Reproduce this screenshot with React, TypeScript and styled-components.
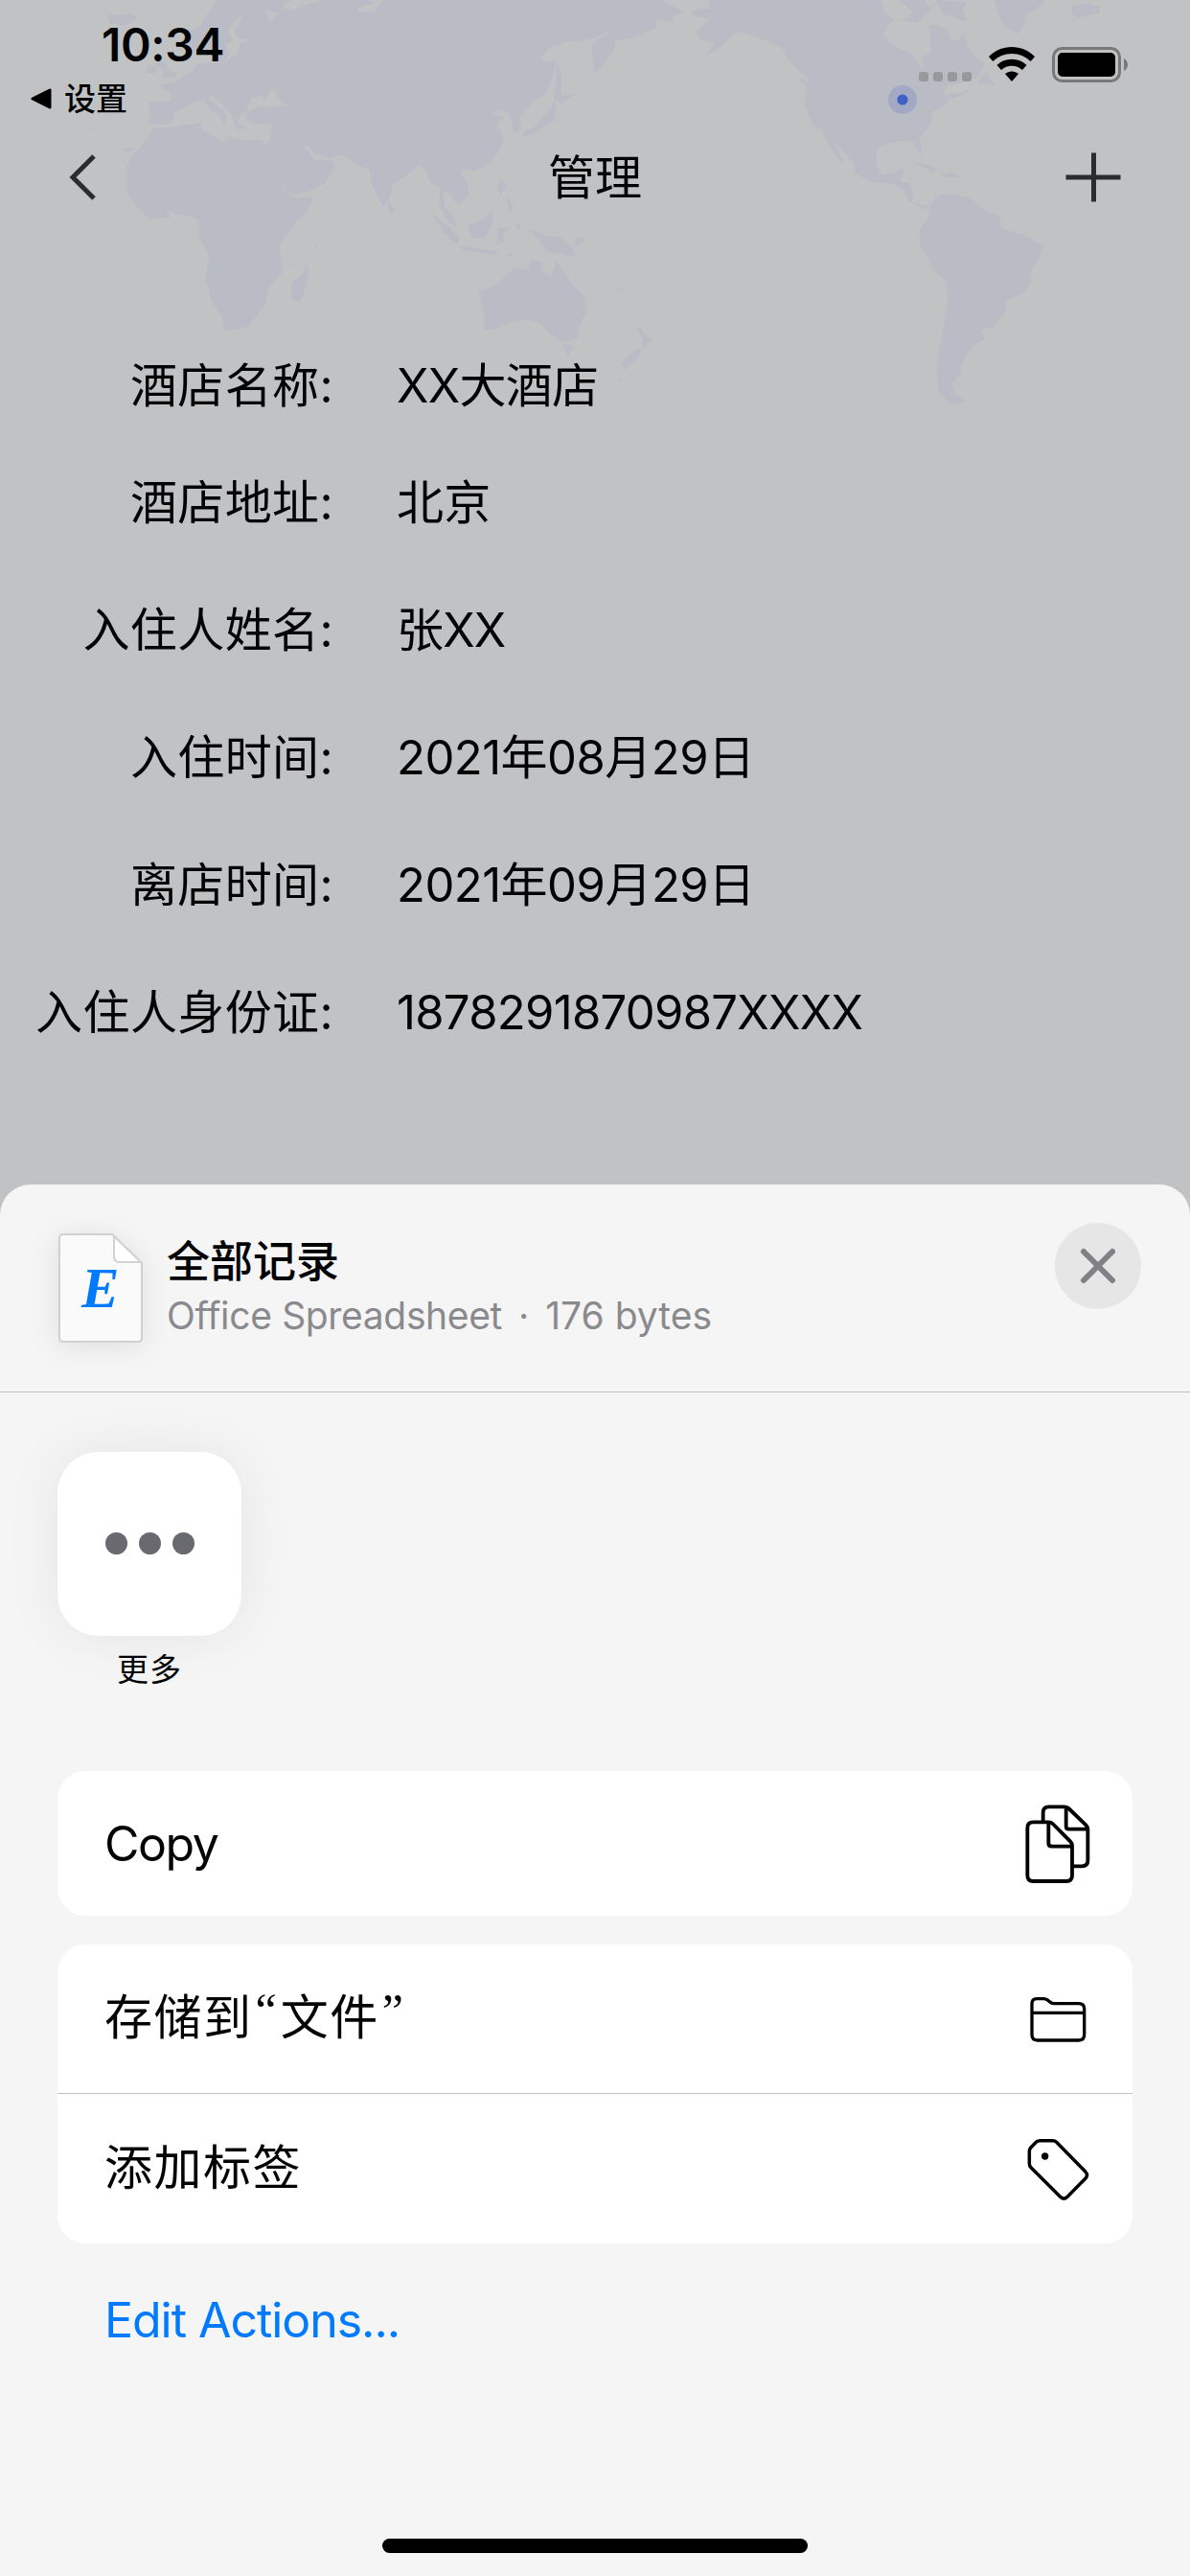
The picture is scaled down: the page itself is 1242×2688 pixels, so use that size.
import React from 'react';
import styled, { createGlobalStyle } from 'styled-components';

const GlobalStyle = createGlobalStyle`
  html, body { margin: 0; padding: 0; background: #c1c2c4; }
  * { box-sizing: border-box; }
`;

const Screen = styled.div`
  position: relative;
  display: flex;
  flex-direction: column;
  width: 1242px;
  height: 2688px;
  overflow: hidden;
  background: #c1c2c4;
  color: #000;
  font-family: Inter, 'Noto Sans CJK SC', sans-serif;
  white-space: nowrap;
`;

const MapBackdrop = styled.svg`
  position: absolute;
  top: 0;
  left: 0;
  width: 1242px;
  height: 440px;
`;

const Text = styled.span<{ $size: number; $weight?: number; $spacing?: number; $color?: string }>`
  font-size: ${(p) => p.$size}px;
  line-height: ${(p) => Math.round(p.$size * 1.2)}px;
  font-weight: ${(p) => p.$weight ?? 400};
  letter-spacing: ${(p) => p.$spacing ?? 0}px;
  color: ${(p) => p.$color ?? '#020304'};
`;

const Quote = styled.span<{ $before: number; $after: number }>`
  margin: 0 ${(p) => p.$after}px 0 ${(p) => p.$before}px;
  font-family: 'Liberation Serif', serif;
  letter-spacing: 0;
  line-height: 0;
  vertical-align: 8px;
`;

const MiddleDot = styled.span`
  margin: 0 6px;
`;

const StatusBar = styled.header`
  position: relative;
  display: flex;
  justify-content: space-between;
  height: 132px;
  padding: 18px 65px 0 32px;
`;

const StatusLeft = styled.div`
  display: flex;
  flex-direction: column;
`;

const Clock = styled.div`
  padding-left: 74px;
  height: 56px;
`;

const BackToApp = styled.div`
  display: flex;
  align-items: center;
  gap: 13px;
  height: 58px;
`;

const StatusIcons = styled.div`
  display: flex;
  align-items: flex-end;
  gap: 18px;
  height: 68px;
`;

const Signal = styled.div`
  display: flex;
  gap: 5px;
  padding-bottom: 1px;
`;

const SignalDot = styled.i`
  width: 10px;
  height: 10px;
  border-radius: 3px;
  background: #98999c;
`;

const NavBar = styled.nav`
  position: relative;
  display: grid;
  grid-template-columns: 1fr auto 1fr;
  align-items: center;
  height: 106px;
  padding: 0 72px;
`;

const NavEnd = styled.div`
  display: flex;
  justify-content: flex-end;
`;

const Details = styled.dl`
  position: relative;
  display: flex;
  flex-direction: column;
  margin: 0;
  padding-top: 108px;
  height: 998px;
`;

const DetailRow = styled.div<{ $height: number }>`
  display: grid;
  grid-template-columns: 348px 1fr;
  column-gap: 66px;
  align-items: center;
  height: ${(p) => p.$height}px;
`;

const DetailLabel = styled.dt`
  display: flex;
  justify-content: flex-end;
`;

const DetailValue = styled.dd`
  display: flex;
  margin: 0;
`;

const Sheet = styled.section`
  position: relative;
  display: flex;
  flex-direction: column;
  flex: 1;
  border-radius: 32px 32px 0 0;
  background: #f5f5f5;
`;

const SheetHeader = styled.div`
  display: flex;
  align-items: flex-start;
  height: 217px;
  padding: 40px 51px 0 50px;
  border-bottom: 1px solid #bfbfc1;
`;

const FileMeta = styled.div`
  display: flex;
  flex-direction: column;
  flex: 1;
  gap: 5px;
  padding: 14px 0 0 13px;
`;

const CloseButton = styled.button`
  display: flex;
  align-items: center;
  justify-content: center;
  width: 90px;
  height: 90px;
  padding: 0;
  border: 0;
  border-radius: 50%;
  background: #e6e6e6;
`;

const Apps = styled.div`
  display: flex;
  height: 395px;
  padding: 62px 60px 0;
`;

const AppItem = styled.div`
  display: flex;
  flex-direction: column;
  align-items: center;
  gap: 15px;
  width: 192px;
`;

const AppTile = styled.div`
  display: flex;
  align-items: center;
  justify-content: center;
  gap: 12px;
  width: 192px;
  height: 192px;
  padding-bottom: 1px;
  border-radius: 43px;
  background: #fff;
  box-shadow: 0 0 60px rgba(0, 0, 0, 0.07);
`;

const TileDot = styled.i`
  width: 23px;
  height: 23px;
  border-radius: 50%;
  background: #696970;
`;

const Actions = styled.div`
  display: flex;
  flex-direction: column;
  gap: 30px;
  padding: 0 60px;
`;

const Card = styled.div`
  display: flex;
  flex-direction: column;
  border-radius: 29px;
  background: #fff;
`;

const ActionRow = styled.div<{ $height: number; $divided?: boolean }>`
  display: flex;
  align-items: center;
  justify-content: space-between;
  height: ${(p) => p.$height}px;
  padding: 0 44px 0 49px;
  border-top: ${(p) => (p.$divided ? '1px solid #c3c3c5' : '0')};
`;

const ActionLabel = styled.div<{ $lift?: number }>`
  display: flex;
  padding-bottom: ${(p) => p.$lift ?? 0}px;
`;

const ActionIcon = styled.div`
  display: flex;
  justify-content: center;
  width: 68px;
  padding-top: 1px;
`;

const EditLink = styled.a`
  display: flex;
  padding: 50px 0 0 109px;
`;

const HomeIndicator = styled.div`
  width: 444px;
  height: 15px;
  margin: auto auto 24px;
  border-radius: 8px;
  background: #000;
`;

const WorldMap = () => (
  <MapBackdrop viewBox="0 0 1242 440" fill="#b9bcc5">
    <g transform="scale(.39605 .33333)" strokeLinejoin="round">
      {/* Europe and Asia */}
      <path d="M570 0 L548 40 528 80 500 98 492 130 512 160 530 146 548 158 566 190 590 196 604 170 594 142 612 126 600 96 618 64 640 46 632 72 618 96 626 120 664 124 630 138 628 164 606 182 596 198 560 196 520 200 508 222 486 236 460 258 424 264 426 276 448 290 450 316 392 320 394 386 436 390 456 378 460 352 490 332 516 316 536 312 552 344 580 364 592 392 598 360 578 340 548 306 556 298 580 318 602 344 614 376 626 404 650 402 628 386 630 364 652 346 660 310 690 296 694 312 716 280 730 282 726 298 756 332 714 336 680 334 652 350 646 370 664 388 716 390 712 436 690 460 704 500 728 550 752 590 770 610 826 594 858 572 882 520 874 502 830 500 806 466 804 448 832 482 866 494 900 484 944 516 974 530 980 580 1010 650 1024 630 1034 580 1080 540 1106 516 1126 544 1132 570 1160 590 1156 640 1180 690 1204 714 1196 680 1172 646 1168 600 1186 608 1208 642 1236 612 1232 572 1212 540 1228 526 1250 538 1290 512 1318 466 1328 436 1310 390 1328 366 1298 358 1318 342 1336 350 1350 382 1352 418 1374 404 1370 368 1404 320 1440 294 1460 226 1466 194 1424 188 1446 150 1500 130 1530 128 1568 118 1575 0 1010 0 990 34 950 40 940 24 984 12 970 0 850 0 800 16 764 34 740 20 728 50 712 70 696 32 728 40 760 4 780 0Z" />
      <path d="M404 400 L450 398 526 384 536 412 570 430 592 446 604 428 650 438 690 438 700 480 724 540 752 596 770 618 826 618 808 664 776 700 736 768 746 850 708 900 700 950 656 1022 594 1038 584 990 560 950 540 876 552 800 522 736 526 690 500 676 460 670 440 650 448 680 398 684 366 656 334 606 334 520 360 470 390 430Z" />
      <path d="M806 828 L816 850 800 920 788 944 768 940 768 884 792 864Z M284 40 L308 50 350 42 360 60 326 82 288 74Z M412 184 L438 196 444 220 468 232 460 244 424 244 432 220 412 206Z M392 200 L414 206 410 230 384 230Z M240 404 L256 398 246 410Z M320 466 L360 462 336 476Z" />
      {/* Islands of south-east Asia and Japan */}
      <path d="M1136 668 L1180 706 1210 740 1206 768 1170 730Z M1210 768 L1250 778 1310 786 1314 798 1220 784Z M1296 662 L1300 700 1276 748 1244 744 1232 706 1270 690Z M1318 556 L1336 580 1320 610 1310 590Z M1336 612 L1354 650 1340 664Z M1312 716 L1348 710 1324 728 1330 756 1310 766Z M1360 698 L1376 710 1362 724Z M1394 716 L1440 738 1480 742 1510 780 1520 808 1480 792 1444 790 1424 756Z M1520 740 L1546 752 1516 770Z M1334 796 L1360 790 1340 806Z M1022 630 L1040 660 1028 670Z M1468 190 L1480 240 1478 300 1516 292 1480 324 1458 312 1466 340 1460 380 1430 398 1388 430 1376 418 1410 396 1436 360 1456 330 1466 250Z" />
      <path d="M1400 812 L1432 822 1426 850 1454 868 1466 812 1484 848 1510 890 1540 930 1546 980 1526 1020 1520 1060 1486 1072 1450 1046 1420 1010 1384 1000 1340 1010 1312 1028 1276 1034 1276 980 1262 912 1310 890 1332 860 1360 836 1390 844Z M1482 1076 L1510 1082 1498 1120Z" />
      <path d="M766 826 L780 828 772 836Z M826 766 L836 770 832 784Z" />
    </g>
    <g transform="translate(621 0) scale(.39605 .33333)">
      <path d="M-10 0 L180 0 200 16 236 34 208 50 204 70 156 60 166 84 130 104 96 120 54 126 50 160 0 232 -10 150 0 130 40 102 60 92 -10 118Z" />
      {/* North America */}
      <path d="M300 0 L756 0 764 44 790 60 772 80 760 112 790 144 840 172 856 210 866 216 864 180 886 160 880 78 904 78 930 98 936 124 960 130 970 102 984 150 1010 190 1028 200 1010 240 960 262 924 270 916 300 980 284 1002 276 960 302 930 310 926 328 890 350 886 390 856 430 862 488 850 470 840 444 800 440 742 462 742 520 760 550 790 540 816 524 806 568 830 574 840 610 836 636 880 644 872 656 826 630 816 600 780 574 730 572 684 540 684 512 650 470 624 428 656 510 640 500 596 408 574 390 552 330 556 272 530 230 566 264 560 244 520 204 490 150 450 126 376 98 350 124 320 156 286 182 316 134 282 128 266 100 302 60 252 46 264 30 300 26Z" />
      <path d="M800 0 L868 0 886 30 850 70 806 64 840 40Z M900 0 L980 6 968 30 982 62 960 66 940 48 916 46Z M1052 0 L1188 0 1166 26 1136 44 1134 70 1114 106 1084 90 1062 48Z M1256 20 L1290 10 1330 22 1328 42 1270 56 1254 36Z M1016 242 L1032 224 1054 266 1010 262Z M842 508 L880 516 900 532 890 540Z M906 546 L940 540 964 554 930 556Z" />
      {/* South America */}
      <path d="M884 642 L900 614 930 606 990 620 1020 654 1068 680 1070 714 1130 736 1182 770 1170 810 1150 840 1148 880 1132 916 1084 942 1084 970 1048 1026 1016 1032 1028 1060 1000 1080 984 1100 976 1120 966 1140 964 1170 940 1200 948 1230 978 1256 938 1266 906 1230 900 1160 908 1090 922 1000 930 940 926 880 892 850 876 800 854 766 856 716 880 682Z" />
      <path d="M108 1018 L134 1050 154 1062 126 1090 122 1056Z M106 1092 L124 1092 108 1126 80 1158 68 1140Z M52 896 L76 912 66 914Z M62 1184 L70 1190 66 1196Z" />
    </g>
    <circle cx="942" cy="104" r="15" fill="#a3a9c4" />
    <circle cx="942" cy="104" r="5.6" fill="#3f62c4" />
  </MapBackdrop>
);

const WifiIcon = () => (
  <svg width="48" height="37" viewBox="0 0 48 37">
    <path d="M24 0 C33 0 41.5 3.6 48 10.200 L43.600 15 C38.200 9.800 31.300 7 24 7 S9.800 9.800 4.400 15 L0 10.200 C6.500 3.600 15 0 24 0Z" />
    <path d="M24 12.800 C30 12.800 35.300 15 39.500 19 L35 24 C32 21.200 28.200 19.700 24 19.700 S16 21.200 13 24 L8.500 19 C12.700 15 18 12.800 24 12.800Z" />
    <path d="M24 25.400 C26.700 25.400 29 26.300 31 28.100 L24 36 L17 28.100 C19 26.300 21.300 25.400 24 25.400Z" />
  </svg>
);

const BatteryIcon = () => (
  <svg width="79" height="37" viewBox="0 0 79 37">
    <rect x="1.500" y="1.500" width="69" height="34" rx="9" fill="none" stroke="#77787a" strokeWidth="3" />
    <rect x="6" y="6" width="60" height="25" rx="5" />
    <path d="M75 12 Q79 14.500 79 18.500 T75 25Z" fill="#77787a" />
  </svg>
);

const FileShadow = styled.g`
  filter: drop-shadow(0 4px 14px rgba(0, 0, 0, 0.09));
`;

const FileIcon = () => (
  <svg width="111" height="140" viewBox="50 1276 111 140" overflow="visible">
    <FileShadow>
      <path d="M66 1288 H117 L148 1318 V1396 Q148 1400 144 1400 H66 Q62 1400 62 1396 V1292 Q62 1288 66 1288Z" fill="#fafafa" stroke="#d0d0d0" strokeWidth="2" strokeLinejoin="round" />
    </FileShadow>
    <path d="M119 1290 L147 1317 H125 Q119 1317 119 1311Z" fill="#fff" stroke="#d2d2d2" strokeWidth="2" strokeLinejoin="round" />
    <text x="85" y="1364" fontFamily="'Liberation Serif', serif" fontWeight="700" fontStyle="italic" fontSize="59" fill="#007aff">E</text>
  </svg>
);

const CopyIcon = () => (
  <svg width="68" height="83" viewBox="149 131 204 249" fill="none" stroke="#000" strokeWidth="11.500" strokeLinejoin="round" strokeLinecap="round">
    <path d="M205 181 V156 Q205 138 223 138 H271 Q279 138 285 143 L339 195 Q345 201 345 209 V306 Q345 324 327 324 H302 M277 142 V199 Q277 208 286 208 H342" />
    <path d="M174 186 H222 Q230 186 235 191 L290 246 Q296 252 296 260 V353 Q296 371 278 371 H174 Q156 371 156 353 V204 Q156 186 174 186Z M222 190 V252 Q222 262 232 262 H294" />
  </svg>
);

const FolderIcon = () => (
  <svg width="61" height="49" viewBox="159 157 183 147" fill="none" stroke="#000" strokeWidth="10" strokeLinejoin="round">
    <path d="M183 165 H205 Q211 165 217 169 L226 176 Q231 180 237 180 H315 Q332 180 332 197 V278 Q332 295 315 295 H185 Q168 295 168 278 V181 Q168 165 183 165Z" />
    <path d="M168 209 H332" />
  </svg>
);

const TagIcon = () => (
  <svg width="65" height="66" viewBox="152 600 195 198">
    <path d="M193 608 H232 Q239 608 244 613 L335 706 Q344 716 335 726 L277 785 Q267 794 257 785 L164 692 Q159 687 159 680 V641 Q159 634 164 629 L180 613 Q185 608 193 608Z" fill="none" stroke="#000" strokeWidth="10.500" strokeLinejoin="round" />
    <circle cx="208" cy="657" r="11" />
  </svg>
);

const details = [
  { label: '酒店名称:', value: 'XX大酒店', height: 112, spacing: -0.7 },
  { label: '酒店地址:', value: '北京', height: 133, spacing: 0.3 },
  { label: '入住人姓名:', value: '张XX', height: 133, spacing: -0.8 },
  { label: '入住时间:', value: '2021年08月29日', height: 133, spacing: -0.5 },
  { label: '离店时间:', value: '2021年09月29日', height: 133, spacing: -0.5 },
  { label: '入住人身份证:', value: '1878291870987XXXX', height: 133, spacing: -0.7 },
];

export default function App() {
  return (
    <Screen>
      <GlobalStyle />
      <WorldMap />
      <StatusBar>
        <StatusLeft>
          <Clock><Text $size={48} $weight={600} $spacing={-0.3}>10:34</Text></Clock>
          <BackToApp>
            <svg width="22" height="22" viewBox="0 0 22 22">
              <path d="M2 11 L20 2 V20Z" stroke="#000" strokeWidth="3" strokeLinejoin="round" />
            </svg>
            <Text $size={33} $weight={500}>设置</Text>
          </BackToApp>
        </StatusLeft>
        <StatusIcons>
          <Signal><SignalDot /><SignalDot /><SignalDot /><SignalDot /></Signal>
          <WifiIcon />
          <BatteryIcon />
        </StatusIcons>
      </StatusBar>
      <NavBar>
        <svg width="29" height="48" viewBox="0 0 29 48" fill="none" stroke="#2b2c2e" strokeWidth="5">
          <path d="M26 2 L4 24 L26 46" />
        </svg>
        <Text $size={49}>管理</Text>
        <NavEnd>
          <svg width="58" height="52" viewBox="0 0 58 52" stroke="#2b2c2e" strokeWidth="5">
            <path d="M0.500 26 H57.500 M29.500 0.500 V51.500" />
          </svg>
        </NavEnd>
      </NavBar>
      <Details>
        {details.map((d) => (
          <DetailRow key={d.label} $height={d.height}>
            <DetailLabel><Text $size={49} $spacing={0.4}>{d.label}</Text></DetailLabel>
            <DetailValue><Text $size={49} $spacing={d.spacing}>{d.value}</Text></DetailValue>
          </DetailRow>
        ))}
      </Details>
      <Sheet>
        <SheetHeader>
          <FileIcon />
          <FileMeta>
            <Text $size={45} $weight={500}>全部记录</Text>
            <Text $size={39} $color="#8a8a8e">
              <Text $size={39} $spacing={-0.35} $color="inherit">Office Spreadsheet</Text>
              {' '}<MiddleDot>·</MiddleDot>{' '}176 bytes
            </Text>
          </FileMeta>
          <CloseButton aria-label="close">
            <svg width="40" height="40" viewBox="0 0 40 40" stroke="#808085" strokeWidth="6" strokeLinecap="round">
              <path d="M5 5 L35 35 M35 5 L5 35" />
            </svg>
          </CloseButton>
        </SheetHeader>
        <Apps>
          <AppItem>
            <AppTile><TileDot /><TileDot /><TileDot /></AppTile>
            <Text $size={33} $spacing={1}>更多</Text>
          </AppItem>
        </Apps>
        <Actions>
          <Card>
            <ActionRow $height={151}>
              <ActionLabel><Text $size={50} $spacing={-1.5}>Copy</Text></ActionLabel>
              <ActionIcon><CopyIcon /></ActionIcon>
            </ActionRow>
          </Card>
          <Card>
            <ActionRow $height={155}>
              <ActionLabel $lift={3}>
                <Text $size={50} $spacing={1.5}>
                  存储到<Quote $before={3} $after={4}>“</Quote>文件<Quote $before={3} $after={0}>”</Quote>
                </Text>
              </ActionLabel>
              <ActionIcon><FolderIcon /></ActionIcon>
            </ActionRow>
            <ActionRow $height={157} $divided>
              <ActionLabel $lift={3}><Text $size={50} $spacing={1.5}>添加标签</Text></ActionLabel>
              <ActionIcon><TagIcon /></ActionIcon>
            </ActionRow>
          </Card>
        </Actions>
        <EditLink><Text $size={50} $spacing={-1.05} $color="#007aff">Edit Actions...</Text></EditLink>
        <HomeIndicator />
      </Sheet>
    </Screen>
  );
}
